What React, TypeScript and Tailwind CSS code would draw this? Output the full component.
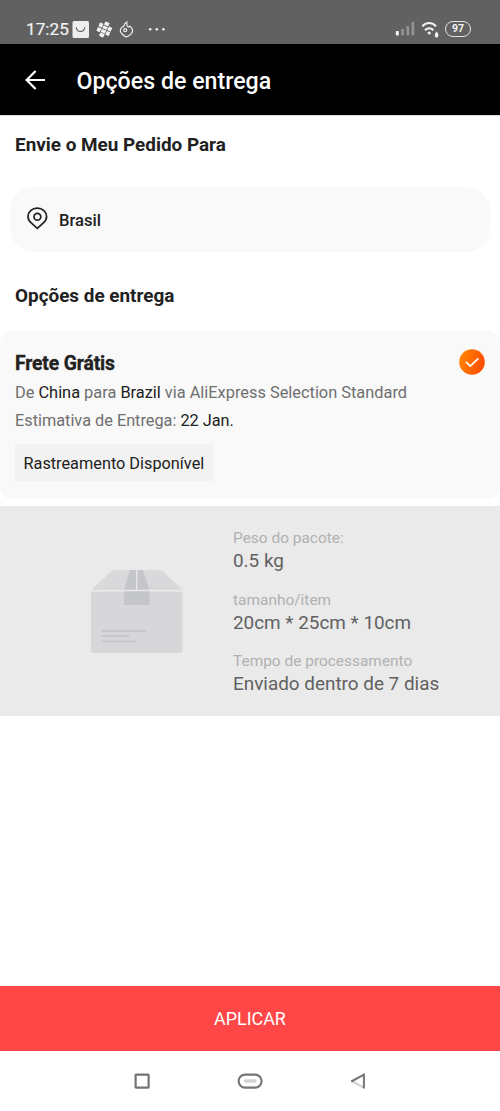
import type { ReactNode } from 'react';

function StatusBar() {
  return (
    <div className="flex h-[44px] items-start bg-[#616161] pt-[19px] pl-[26px] text-[#f2f2f2]">
      <span className="w-[46px] text-[17.2px] leading-[21px] whitespace-nowrap [-webkit-text-stroke:0.2px_#f2f2f2]">17:25</span>
      <svg className="mt-[1px] h-[18px] w-[18px]" viewBox="0 0 18 18">
        <rect x="0.5" y="1" width="16.5" height="17" rx="1.5" fill="#eeeeee" />
        <path d="M4.2 7.2C4.7 12.8 12.3 12.8 12.8 7.2" fill="none" stroke="#616161" strokeWidth="1.2" />
      </svg>
      <svg className="mt-[2px] ml-[6px] h-[17px] w-[17px]" viewBox="0 0 17 17" fill="#f0f0f0">
        <g transform="rotate(24 8.5 8.5)">
          <rect x="6" y="0.6" width="4.6" height="3.7" rx="0.4" />
          <rect x="1.6" y="3.8" width="3.7" height="4.1" rx="0.4" />
          <rect x="6" y="5" width="4.6" height="3.1" rx="0.4" />
          <rect x="11.3" y="3.8" width="3.7" height="4.1" rx="0.4" />
          <rect x="1.6" y="8.8" width="3.7" height="4.1" rx="0.4" />
          <rect x="6" y="8.8" width="4.6" height="3.3" rx="0.4" />
          <rect x="11.3" y="8.8" width="3.7" height="4.1" rx="0.4" />
          <rect x="6" y="12.8" width="4.6" height="3.7" rx="0.4" />
        </g>
      </svg>
      <svg className="mt-[2px] ml-[6px] h-[17px] w-[16px]" viewBox="0 0 16 17" fill="none" stroke="#eeeeee" strokeWidth="1.2">
        <path d="M7.9 1C5.6 2.2 4.9 4 4.8 5.2C2.5 6 1.3 7.7 1.3 9.8C1.3 11.8 4.8 14.9 7.2 16C10.3 15 13.6 12.2 13.6 9.5C13.6 7.6 12.4 6.2 10.8 5.2C10.4 5.9 9.8 6.1 9.1 5.9C7.9 4.8 7.5 2.9 7.9 1Z" />
        <circle cx="6.2" cy="9.2" r="1.5" />
      </svg>
      <svg className="mt-[8px] ml-[13px] h-[4px] w-[18px]" viewBox="0 0 18 4" fill="#f0f0f0">
        <circle cx="2.2" cy="2.2" r="1.3" />
        <circle cx="8.8" cy="2.2" r="1.3" />
        <circle cx="15.4" cy="2.2" r="1.3" />
      </svg>
      <div className="mr-[29px] ml-auto flex items-start">
        <svg className="mt-[3px] h-[14px] w-[20px]" viewBox="0 0 20 14">
          <rect x="0.8" y="9" width="3" height="4.5" rx="0.8" fill="#f5f5f5" />
          <rect x="6.2" y="7" width="2.8" height="6.5" rx="0.8" fill="#929292" />
          <rect x="11.4" y="4" width="2.8" height="9.5" rx="0.8" fill="#929292" />
          <rect x="16.5" y="0" width="2.8" height="13.5" rx="0.8" fill="#929292" />
        </svg>
        <svg className="mt-[2px] ml-[6px] h-[18px] w-[18px]" viewBox="0 0 18 18">
          <path d="M1.3 5.4C5 1 11.3 1 15 5.4M4 9.2C6.4 6.6 10 6.6 12.4 9.2" fill="none" stroke="#f2f2f2" strokeWidth="2" />
          <circle cx="8.2" cy="12" r="1.6" fill="#f2f2f2" />
          <path d="M15.5 10.2L17.3 13V15Q17.2 16.5 15.6 16.5Q14 16.5 13.9 15V13Z" fill="#f2f2f2" />
        </svg>
        <div className="mt-[2px] ml-[6px] flex h-[16px] w-[26px] items-center justify-center rounded-full border-[1.5px] border-[#e4e4e4] pt-[1px] text-[10.5px] leading-none font-bold">97</div>
      </div>
    </div>
  );
}

function Header() {
  return (
    <header className="flex h-[71px] items-center bg-black text-white">
      <svg className="ml-[25px] h-[20px] w-[20px]" viewBox="0 0 20 20" fill="none" stroke="#ffffff" strokeWidth="2.2">
        <path d="M20 10H2M10.6 0.9L1.6 10L10.6 19.1" />
      </svg>
      <h1 className="ml-[31.5px] pt-[2px] text-[23.2px] leading-[28px] font-medium whitespace-nowrap">Opções de entrega</h1>
    </header>
  );
}

function SectionTitle({ children }: { children: ReactNode }) {
  return <h2 className="h-[24px] pt-[0.4px] pl-[15px] text-[18.9px] leading-[24px] font-bold whitespace-nowrap">{children}</h2>;
}

function Detail({ label, value }: { label: string; value: string }) {
  return (
    <div className="h-[61.5px] whitespace-nowrap">
      <div className="text-[15.45px] leading-[22px] text-[#b1b1b1]">{label}</div>
      <div className="text-[18.9px] leading-[24px] text-[#616161]">{value}</div>
    </div>
  );
}

function PackageIcon() {
  return (
    <svg className="mt-[64px] ml-[90px] h-[84px] w-[94px]" viewBox="0 0 94 84">
      <path d="M25 0H69Q71 0 73 1.5L92.5 20H1L21 1.5Q23 0 25 0Z" fill="#d9d9db" />
      <path d="M1 21.5H92.5V80.5Q92.5 83 90 83H3.5Q1 83 1 80.5Z" fill="#d7d7da" />
      <path d="M40 0H53L59.5 20V35H34V20Z" fill="#c5c6ca" />
      <path d="M46.7 0V20" stroke="#e9e9ea" strokeWidth="1.2" />
      <path d="M1 20.6H92.5" stroke="#e9e9ea" strokeWidth="1.5" />
      <path d="M11 61H56.5M11 66H39M11 71.5H46" stroke="#c6c7cb" strokeWidth="2" />
    </svg>
  );
}

export default function App() {
  return (
    <div className="flex h-[1111px] w-[500px] flex-col overflow-hidden bg-white font-['Roboto',sans-serif] text-[#212121]">
      <StatusBar />
      <Header />
      <main className="flex flex-1 flex-col border-t border-[#dcdcdc] pt-[17px]">
        <SectionTitle>Envie o Meu Pedido Para</SectionTitle>
        <div className="mx-[10px] mt-[30px] flex h-[65px] items-center rounded-[24px] bg-[#f9f9f9] pl-[17px]">
          <svg className="mb-[2px] h-[23px] w-[21px]" viewBox="0 0 21 23" fill="none" stroke="#212121" strokeWidth="1.7">
            <path d="M10.3 21.3L4.5 16.2C2.2 14.2 1 12.2 1 9.7C1 4.7 5 1.2 10.3 1.2S19.6 4.7 19.6 9.7C19.6 12.2 18.4 14.2 16.1 16.2Z" strokeLinejoin="round" />
            <circle cx="10.4" cy="9.8" r="3.4" />
          </svg>
          <span className="ml-[11px] pt-[3px] text-[16.6px] leading-[22px] font-medium">Brasil</span>
        </div>
        <div className="mt-[32px]">
          <SectionTitle>Opções de entrega</SectionTitle>
        </div>
        <section className="mt-[23px] h-[168px] rounded-[12px] bg-[#f9f9f9] px-[15px] pt-[18px]">
          <div className="flex h-[30px] justify-between">
            <h3 className="pt-[1px] text-[19.3px] leading-[28px] font-bold tracking-[-0.1px] [-webkit-text-stroke:0.35px_#212121]">Frete Grátis</h3>
            <svg className="h-[26px] w-[26px]" viewBox="0 0 26 26">
              <defs>
                <linearGradient id="selected" x1="0" y1="0" x2="1" y2="0.3">
                  <stop offset="0" stopColor="#ff8a00" />
                  <stop offset="1" stopColor="#ff5000" />
                </linearGradient>
              </defs>
              <circle cx="13" cy="13" r="12.8" fill="url(#selected)" />
              <path d="M7 12.9L11.3 17.1L19.4 9.4" fill="none" stroke="#ffffff" strokeWidth="1.7" />
            </svg>
          </div>
          <p className="text-[16.37px] leading-[28px] whitespace-nowrap text-[#6f6f6f]">
            De <span className="text-[#212121]">China</span> para <span className="text-[#212121]">Brazil</span> via AliExpress Selection Standard
          </p>
          <p className="text-[16.3px] leading-[28px] whitespace-nowrap text-[#6f6f6f]">
            Estimativa de Entrega: <span className="text-[#212121]">22 Jan.</span>
          </p>
          <div className="mt-[9px] flex h-[37px] w-[198px] items-center bg-[#f2f2f2] pt-[3px] pl-[8.5px] text-[16.3px] whitespace-nowrap">Rastreamento Disponível</div>
        </section>
        <section className="mt-[7px] flex h-[210px] bg-[#eaeaea]">
          <PackageIcon />
          <div className="ml-[49px] pt-[21px]">
            <Detail label="Peso do pacote:" value="0.5 kg" />
            <Detail label="tamanho/item" value="20cm * 25cm * 10cm" />
            <Detail label="Tempo de processamento" value="Enviado dentro de 7 dias" />
          </div>
        </section>
        <button className="mt-auto h-[65px] bg-[#ff4747] pt-[2px] text-[17.9px] text-white">APLICAR</button>
      </main>
      <nav className="flex h-[60px] pt-[22px]">
        <svg className="ml-[134px] h-[16px] w-[16px]" viewBox="0 0 16 16">
          <rect x="1.6" y="1.6" width="13" height="13" rx="0.5" fill="none" stroke="#747474" strokeWidth="2.2" />
        </svg>
        <svg className="ml-[87px] h-[16px] w-[26px]" viewBox="0 0 26 16">
          <rect x="1.6" y="1.6" width="23" height="13" rx="6.5" fill="none" stroke="#747474" strokeWidth="2.1" />
          <path d="M8.5 8H18" stroke="#d3d3d3" strokeWidth="3.5" strokeLinecap="round" />
        </svg>
        <svg className="ml-[87px] h-[16px] w-[16px]" viewBox="0 0 16 16" fill="none" strokeWidth="2">
          <path d="M1.5 8L13.5 14.3" stroke="#d0d0d0" />
          <path d="M1.3 8.5L13.9 1.7V15.6" stroke="#747474" />
        </svg>
      </nav>
    </div>
  );
}
